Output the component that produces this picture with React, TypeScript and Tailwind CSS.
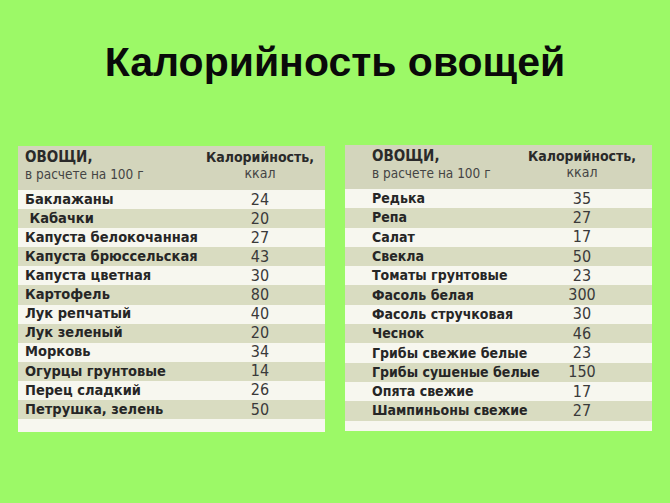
import React from "react";

const left: [string, string][] = [
  ["Баклажаны", "24"],
  ["\u00a0Кабачки", "20"],
  ["Капуста белокочанная", "27"],
  ["Капуста брюссельская", "43"],
  ["Капуста цветная", "30"],
  ["Картофель", "80"],
  ["Лук репчатый", "40"],
  ["Лук зеленый", "20"],
  ["Морковь", "34"],
  ["Огурцы грунтовые", "14"],
  ["Перец сладкий", "26"],
  ["Петрушка, зелень", "50"],
];

const right: [string, string][] = [
  ["Редька", "35"],
  ["Репа", "27"],
  ["Салат", "17"],
  ["Свекла", "50"],
  ["Томаты грунтовые", "23"],
  ["Фасоль белая", "300"],
  ["Фасоль стручковая", "30"],
  ["Чеснок", "46"],
  ["Грибы свежие белые", "23"],
  ["Грибы сушеные белые", "150"],
  ["Опята свежие", "17"],
  ["Шампиньоны свежие", "27"],
];

const narrow = { fontFamily: '"Liberation Sans Narrow", "DejaVu Sans Condensed", "Liberation Sans", sans-serif' };

function Table({ rows, padL, numX, rowH, mt, nameSize }: { rows: [string, string][]; padL: string; numX: string; rowH: string; mt: string; nameSize: string }) {
  return (
    <div className={`w-[307px] h-[286px] flex flex-col bg-[#f7f7ef] ${mt}`} style={narrow}>
      <div className={`h-[44px] shrink-0 bg-[#d3d5bc] flex ${padL} pt-[3px] text-[#2a2a2a]`}>
        <div className="flex-1 min-w-0 flex flex-col">
          <span className="text-[15px] leading-[17px] font-bold">ОВОЩИ,</span>
          <span className="text-[13.5px] leading-[16px] text-[#444]">в расчете на 100 г</span>
        </div>
        <div className={`${numX} shrink-0 flex flex-col items-center`}>
          <span className="text-[14px] leading-[16px] font-bold">Калорийность,</span>
          <span className="text-[14px] leading-[16px] text-[#444]">ккал</span>
        </div>
      </div>
      {rows.map(([n, v], i) => (
        <div key={n} className={`${rowH} shrink-0 flex items-center ${padL} ${i % 2 ? "bg-[#d9dcc1]" : "bg-[#f7f7ef]"}`}>
          <span className={`flex-1 min-w-0 ${nameSize} font-bold text-[#262626] whitespace-pre`}>{n}</span>
          <span className={`${numX} shrink-0 text-center text-[16px] text-[#3a3a3a]`}>{v}</span>
        </div>
      ))}
    </div>
  );
}

export default function App() {
  return (
    <div className="w-[670px] h-[503px] bg-[#9cf967] flex flex-col">
      <h1
        className="h-[146px] pb-[20px] flex items-center justify-center text-[41px] font-bold text-[#0a0a0a]"
        style={{ fontFamily: '"Liberation Sans", Arial, sans-serif' }}
      >
        Калорийность овощей
      </h1>
      <div className="flex pl-[18px] gap-[20px]">
        <Table rows={left} padL="pl-[7px]" numX="w-[110px] mr-[10px]" rowH="h-[19.1px]" mt="mt-0" nameSize="text-[14.5px]" />
        <Table rows={right} padL="pl-[27px]" numX="w-[110px] mr-[15px]" rowH="h-[19.3px]" mt="-mt-[1px]" nameSize="text-[14px]" />
      </div>
    </div>
  );
}
